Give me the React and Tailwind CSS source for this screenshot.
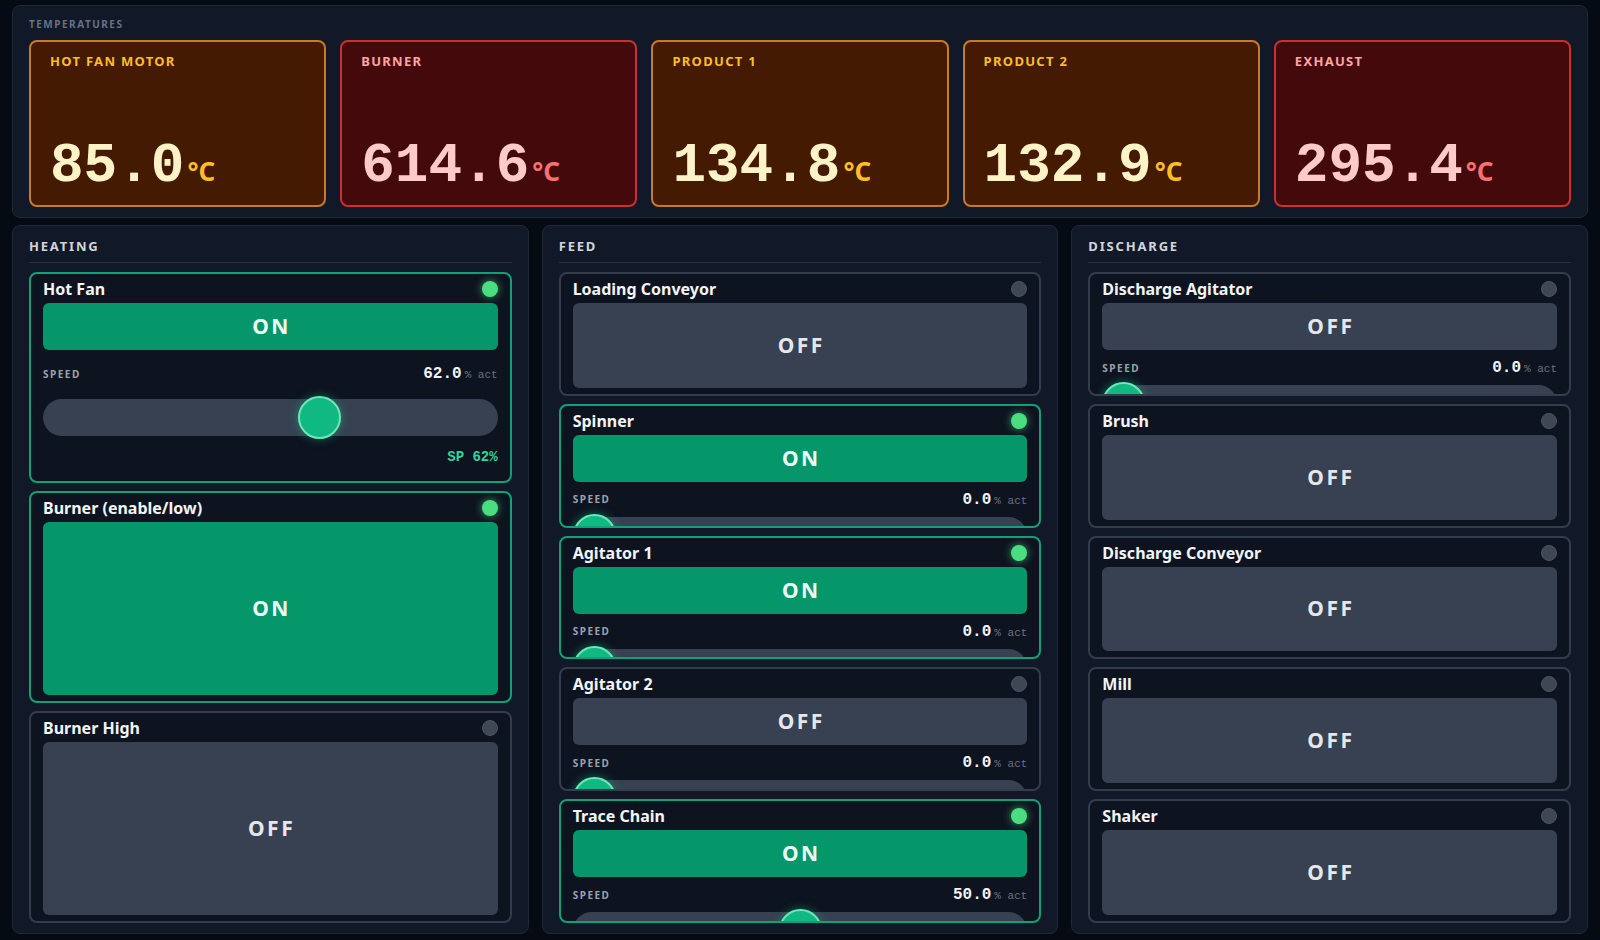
import React from "react";

const temps = [
  { label: "HOT FAN MOTOR", value: "85.0", tone: "amber" },
  { label: "BURNER", value: "614.6", tone: "red" },
  { label: "PRODUCT 1", value: "134.8", tone: "amber" },
  { label: "PRODUCT 2", value: "132.9", tone: "amber" },
  { label: "EXHAUST", value: "295.4", tone: "red" },
];

const sans = { fontFamily: '"Noto Sans", "Open Sans", sans-serif' };
const mono = { fontFamily: '"Liberation Mono", "DejaVu Sans Mono", monospace' };

function TempCard({ label, value, tone }) {
  const amber = tone === "amber";
  return (
    <div
      className={`flex-1 h-[167px] rounded-lg border-2 flex flex-col justify-between pl-[19px] pr-4 pt-[11px] pb-[11px] ${
        amber ? "bg-[#441a03] border-[#c97a25]" : "bg-[#440a0b] border-[#c9302f]"
      }`}
    >
      <div
        className={`text-[13px] leading-4 font-bold tracking-[0.1em] ${amber ? "text-[#fbbf24]" : "text-[#fca5a5]"}`}
        style={sans}
      >
        {label}
      </div>
      <div className="flex items-baseline gap-[3px]">
        <span
          className={`text-[56px] leading-none font-bold ${amber ? "text-[#fef3c7]" : "text-[#fecaca]"}`}
          style={mono}
        >
          {value}
        </span>
        <span
          className={`text-[26px] leading-none font-bold ${amber ? "text-[#fbbf24]" : "text-[#f87171]"}`}
          style={sans}
        >
          °C
        </span>
      </div>
    </div>
  );
}

function Led({ on }) {
  return on ? (
    <span className="w-4 h-4 rounded-full bg-[#4ade80] shadow-[0_0_8px_rgba(74,222,128,0.7)]" />
  ) : (
    <span className="w-4 h-4 rounded-full bg-[#3f4654] border border-[#4b5563]" />
  );
}

function Slider({ pct }) {
  return (
    <div className="relative h-[43px] shrink-0">
      <div className="absolute left-0 right-0 top-[3px] h-[37px] rounded-full bg-[#374151]" />
      <div
        className="absolute top-0 w-[43px] h-[43px] rounded-full bg-[#10b981] border-2 border-[#6ee7b7] shadow-[0_0_10px_rgba(16,185,129,0.55)]"
        style={{ left: `calc(${pct}% - ${(pct * 43) / 100}px)` }}
      />
    </div>
  );
}

function SpeedRow({ value, className = "" }) {
  return (
    <div className={`flex items-center justify-between h-4 shrink-0 ${className}`}>
      <span className="text-[10px] font-bold tracking-[0.15em] text-[#9ca3af]" style={sans}>
        SPEED
      </span>
      <span className="flex items-baseline gap-[3px]" style={mono}>
        <span className="text-[16px] font-bold text-[#f3f4f6]">{value.toFixed(1)}</span>
        <span className="text-[11px] text-[#6b7280]">% act</span>
      </span>
    </div>
  );
}

function StateButton({ on, grow }) {
  return (
    <div
      className={`mt-1 rounded-md flex items-center justify-center ${grow ? "flex-1 min-h-0" : "h-[47px] shrink-0"} ${
        on ? "bg-[#059669]" : "bg-[#374151]"
      }`}
    >
      <span
        className={`text-[21px] leading-none font-bold tracking-[0.12em] pl-[0.12em] ${on ? "text-[#ecfdf5]" : "text-[#e5e7eb]"}`}
        style={sans}
      >
        {on ? "ON" : "OFF"}
      </span>
    </div>
  );
}

function Title({ name, on }) {
  return (
    <div className="flex items-center justify-between h-5 shrink-0">
      <span className="text-[16px] leading-5 font-bold text-[#f3f4f6]" style={sans}>
        {name}
      </span>
      <Led on={on} />
    </div>
  );
}

function cardClass(on) {
  return `rounded-lg border-2 bg-[#0d131f] ${on ? "border-[#12a079]" : "border-[#343d4c]"}`;
}

function ItemCard({ name, on, speed }) {
  const hasSpeed = speed !== undefined;
  return (
    <div className={`flex-1 min-h-0 overflow-hidden flex flex-col pt-[5px] px-3 pb-1.5 ${cardClass(on)}`}>
      <Title name={name} on={on} />
      <StateButton on={on} grow={!hasSpeed} />
      {hasSpeed && (
        <>
          <SpeedRow value={speed} className="mt-2.5" />
          <div className="mt-1.5">
            <Slider pct={speed} />
          </div>
        </>
      )}
    </div>
  );
}

function HotFanCard() {
  return (
    <div className={`shrink-0 flex flex-col pt-[5px] px-3 pb-[16px] ${cardClass(true)}`}>
      <Title name="Hot Fan" on />
      <StateButton on />
      <SpeedRow value={62} className="mt-4" />
      <div className="mt-[14px]">
        <Slider pct={62} />
      </div>
      <div className="mt-2.5 h-4 flex justify-end items-center">
        <span className="text-[14px] font-bold text-[#34d399]" style={mono}>
          SP 62%
        </span>
      </div>
    </div>
  );
}

function Panel({ title, children }) {
  return (
    <div className="flex-1 min-w-0 rounded-lg border border-[#1f2937] bg-[#111827] px-4 pt-3 pb-2.5 flex flex-col">
      <div
        className="h-4 text-[13px] leading-4 font-bold tracking-[0.14em] text-[#d1d5db] shrink-0"
        style={sans}
      >
        {title}
      </div>
      <div className="mt-2 border-t border-[#263041] shrink-0" />
      <div className="mt-[9px] flex-1 min-h-0 flex flex-col gap-2">{children}</div>
    </div>
  );
}

export default function App() {
  return (
    <div className="w-[1600px] h-[940px] bg-[#060a12] px-3 pt-[5px] pb-[6px] flex flex-col gap-[7px] overflow-hidden" style={sans}>
      <div className="shrink-0 rounded-lg border border-[#1f2937] bg-[#111827] px-[16px] pt-3 pb-[10px]">
        <div className="text-[10px] leading-3 font-bold tracking-[0.15em] text-[#6b7280]">TEMPERATURES</div>
        <div className="mt-[10px] flex gap-[14px]">
          {temps.map((t) => (
            <TempCard key={t.label} {...t} />
          ))}
        </div>
      </div>

      <div className="flex-1 min-h-0 flex gap-[13px]">
        <Panel title="HEATING">
          <HotFanCard />
          <ItemCard name="Burner (enable/low)" on />
          <ItemCard name="Burner High" on={false} />
        </Panel>
        <Panel title="FEED">
          <ItemCard name="Loading Conveyor" on={false} />
          <ItemCard name="Spinner" on speed={0} />
          <ItemCard name="Agitator 1" on speed={0} />
          <ItemCard name="Agitator 2" on={false} speed={0} />
          <ItemCard name="Trace Chain" on speed={50} />
        </Panel>
        <Panel title="DISCHARGE">
          <ItemCard name="Discharge Agitator" on={false} speed={0} />
          <ItemCard name="Brush" on={false} />
          <ItemCard name="Discharge Conveyor" on={false} />
          <ItemCard name="Mill" on={false} />
          <ItemCard name="Shaker" on={false} />
        </Panel>
      </div>
    </div>
  );
}
